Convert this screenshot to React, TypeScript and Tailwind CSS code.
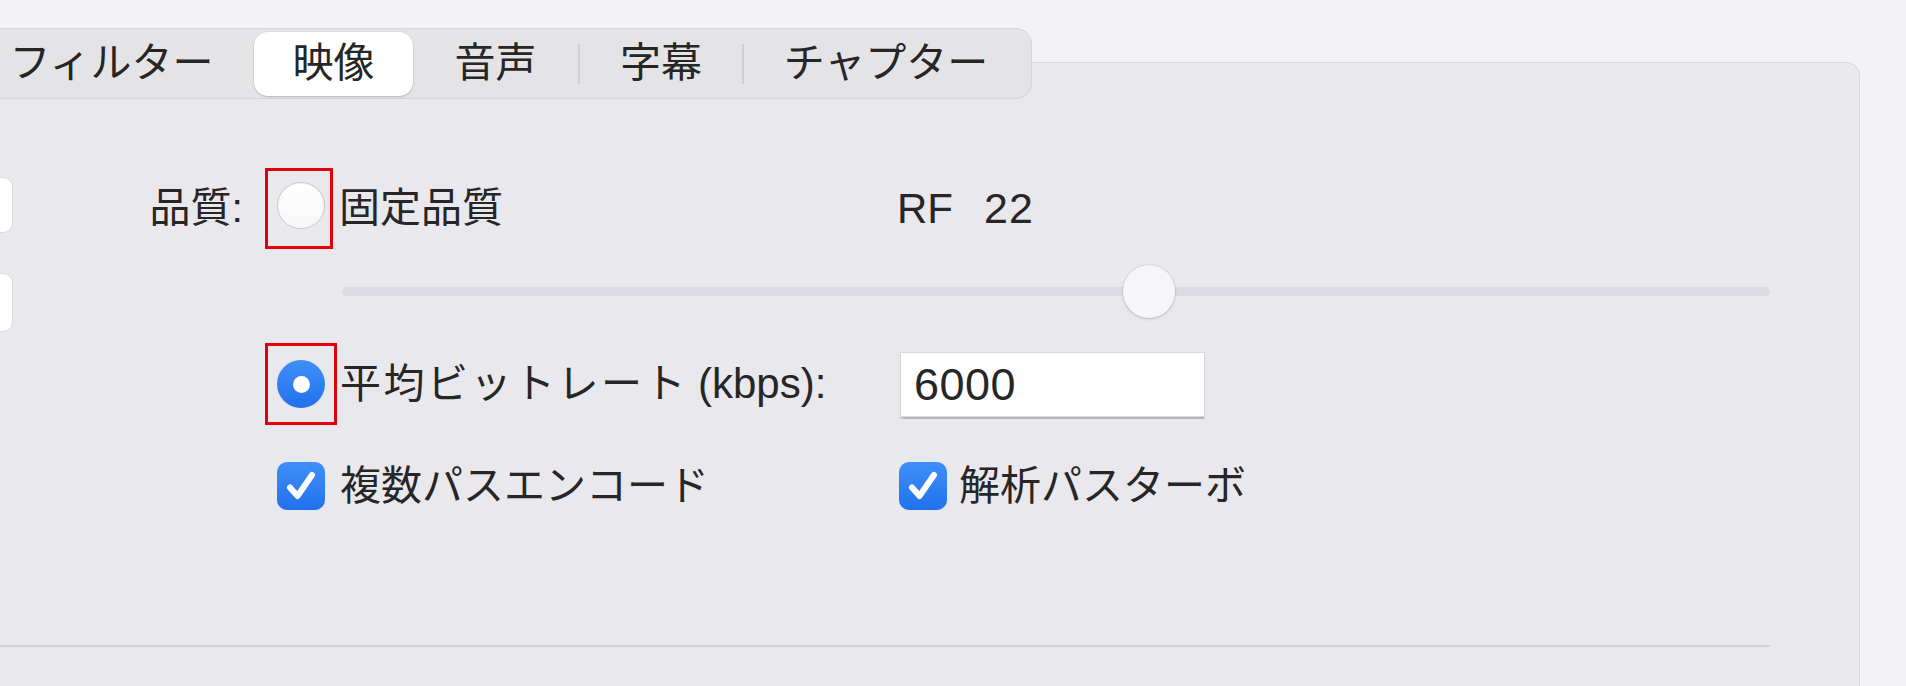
import React from "react";

function Tab({ label, w, selected }: { label: string; w: string; selected?: boolean }) {
  if (selected) {
    return (
      <div className={`${w} h-[64px] flex items-center justify-center rounded-[14px] bg-white shadow-[0_1px_2px_rgba(0,0,0,0.18),0_0_0_0.5px_rgba(0,0,0,0.06)]`}>
        {label}
      </div>
    );
  }
  return <div className={`${w} h-[64px] flex items-center justify-center`}>{label}</div>;
}

function Divider() {
  return <div className="w-[2px] h-[40px] bg-[#cfcfd3]" />;
}

function RadioOff() {
  return (
    <div className="w-[48px] h-[47px] rounded-full bg-linear-to-b from-[#ffffff] to-[#f7f7f8] border border-[#c8c8cc] shadow-[inset_0_1px_1px_rgba(0,0,0,0.06)]" />
  );
}

function RadioOn() {
  return (
    <div className="w-[48px] h-[48px] rounded-full bg-linear-to-b from-[#3f8ff8] to-[#2271ee] flex items-center justify-center">
      <div className="w-[17px] h-[17px] rounded-full bg-white" />
    </div>
  );
}

function CheckOn() {
  return (
    <div className="w-[48px] h-[48px] rounded-[10px] bg-linear-to-b from-[#3f8ff8] to-[#2271ee] flex items-center justify-center shrink-0">
      <svg width="48" height="48" viewBox="0 0 48 48" fill="none">
        <path d="M13 25.5 L20.5 34 L35 13" stroke="white" strokeWidth="6" strokeLinecap="round" strokeLinejoin="round" />
      </svg>
    </div>
  );
}

export default function App() {
  return (
    <div className="w-[1906px] h-[686px] overflow-hidden bg-[#f3f3f5] text-[#262626] flex flex-col font-['Liberation_Sans','Noto_Sans_CJK_JP',sans-serif]">
      {/* Tab bar */}
      <div className="relative z-10 mt-[28px] flex shrink-0">
        <div className="-ml-[35px] h-[71px] flex items-center rounded-[16px] border border-[#d6d6da] bg-[#e4e4e7] px-[3px] text-[41px] leading-none">
          <Tab label="フィルター" w="w-[285px]" />
          <Tab label="映像" w="w-[159px]" selected />
          <Tab label="音声" w="w-[165px]" />
          <Divider />
          <Tab label="字幕" w="w-[162px]" />
          <Divider />
          <Tab label="チャプター" w="w-[284px]" />
        </div>
      </div>

      {/* Panel */}
      <div className="-mt-[37px] -ml-[60px] w-[1920px] h-[700px] shrink-0 rounded-tr-[14px] border-t border-r border-[#d8d8dc] bg-[#e9e8ed] flex flex-col">
        <div className="flex pl-[13px] items-start">
          {/* cut-off left column */}
          <div className="w-[60px] flex flex-col shrink-0">
            <div className="mt-[114px] h-[56px] rounded-[10px] bg-white border border-[#d9d9dd]" />
            <div className="mt-[40px] h-[59px] rounded-[10px] bg-white border border-[#d9d9dd]" />
          </div>

          {/* form */}
          <div className="flex flex-col pt-[105px] text-[41px] leading-none">
            {/* Row 1 */}
            <div className="flex items-center h-[81px]">
              <div className="w-[230px] text-right">品質:</div>
              <div className="ml-[22px] w-[68px] h-[81px] border-[3px] border-[#e2000b] flex items-start">
                <div className="ml-[9px] mt-[11px]">
                  <RadioOff />
                </div>
              </div>
              <div className="ml-[6px] w-[558px]">固定品質</div>
              <div className="text-[42px]">RF</div>
              <div className="ml-[31px] text-[43px] tracking-[1px]">22</div>
            </div>

            {/* Slider */}
            <div className="ml-[329px] mt-[16px] w-[1428px] h-[53px] relative flex items-center">
              <div className="w-full h-[9px] rounded-full bg-[#dcdbe1]" />
              <div
                className="absolute top-0 w-[52px] h-[53px] rounded-full bg-[#f6f6f8] shadow-[0_1px_3px_rgba(0,0,0,0.18),0_0_0_0.5px_rgba(0,0,0,0.08)]"
                style={{ left: "781px" }}
              />
            </div>

            {/* Row 3 */}
            <div className="flex items-center h-[82px] mt-[25px]">
              <div className="w-[252px] shrink-0" />
              <div className="w-[72px] h-[82px] border-[3px] border-[#e2000b] flex items-center shrink-0">
                <div className="ml-[9px]">
                  <RadioOn />
                </div>
              </div>
              <div className="ml-[3px] w-[560px] shrink-0 flex items-center">
                <span className="tracking-[2.5px]">平均ビットレート</span>
                <span className="ml-[10px] text-[42px]">(kbps):</span>
              </div>
              <div className="w-[305px] h-[65px] bg-white border border-[#dadadd] shadow-[0_1.5px_1px_rgba(0,0,0,0.22)] flex items-center pl-[13px] text-[45px] tracking-[0.5px]">
                6000
              </div>
            </div>

            {/* Row 4 */}
            <div className="flex items-center h-[48px] mt-[37px]">
              <div className="w-[264px] shrink-0" />
              <CheckOn />
              <div className="ml-[15px] w-[559px] shrink-0">複数パスエンコード</div>
              <CheckOn />
              <div className="ml-[12px]">解析パスターボ</div>
            </div>
          </div>
        </div>

        {/* separator */}
        <div className="mt-[135px] w-[1830px] h-[2px] bg-[#d2d2d6]" />
      </div>
    </div>
  );
}
